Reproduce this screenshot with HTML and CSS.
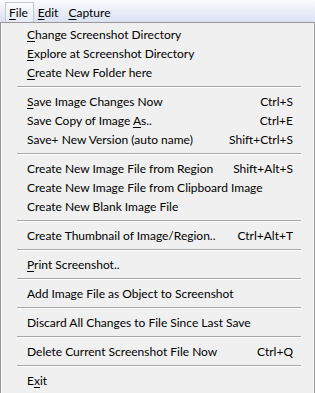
FILE: index.html
```html
<!DOCTYPE html>
<html lang="en">
<head>
    <meta charset="UTF-8">
    <title>File menu</title>
    <link rel="stylesheet" href="styles.css">
</head>
<body>
    <div class="menubar">
        <span class="top-item open"><u>F</u>ile</span>
        <span class="top-item"><u>E</u>dit</span>
        <span class="top-item"><u>C</u>apture</span>
    </div>
    <div class="dropdown">
        <div class="item"><span><u>C</u>hange Screenshot Directory</span></div>
        <div class="item"><span><u>E</u>xplore at Screenshot Directory</span></div>
        <div class="item"><span><u>C</u>reate New Folder here</span></div>
        <div class="sep"></div>
        <div class="item"><span><u>S</u>ave Image Changes Now</span><span class="key">Ctrl+S</span></div>
        <div class="item"><span>Save Copy of Image <u>A</u>s..</span><span class="key">Ctrl+E</span></div>
        <div class="item"><span>Save+ New Version (auto name)</span><span class="key">Shift+Ctrl+S</span></div>
        <div class="sep"></div>
        <div class="item"><span>Create New Image File from Region</span><span class="key">Shift+Alt+S</span></div>
        <div class="item"><span>Create New Image File from Clipboard Image</span></div>
        <div class="item"><span>Create New Blank Image File</span></div>
        <div class="sep"></div>
        <div class="item"><span>Create Thumbnail of Image/Region..</span><span class="key">Ctrl+Alt+T</span></div>
        <div class="sep"></div>
        <div class="item"><span><u>P</u>rint Screenshot..</span></div>
        <div class="sep"></div>
        <div class="item"><span>Add Image File as Object to Screenshot</span></div>
        <div class="sep"></div>
        <div class="item"><span>Discard All Changes to File Since Last Save</span></div>
        <div class="sep"></div>
        <div class="item"><span>Delete Current Screenshot File Now</span><span class="key">Ctrl+Q</span></div>
        <div class="sep"></div>
        <div class="item"><span>E<u>x</u>it</span></div>
    </div>
</body>
</html>
```

FILE: styles.css
```css
body {
    margin: 0;
    width: 315px;
    height: 393px;
    overflow: hidden;
    background-color: #f0f0f0;
    font-family: "Segoe UI", Lato, "Liberation Sans", sans-serif;
    font-size: 12px;
    color: #000000;
}
u {
    text-decoration-thickness: 1px;
    text-underline-offset: 2px;
}
.menubar {
    display: flex;
    height: 23px;
    padding-left: 5px;
    background: linear-gradient(to bottom, #fbfcfe 0%, #e9edf7 50%, #dbe2f3 100%);
    border-bottom: 1px solid #979797;
    box-sizing: border-box;
}
.top-item {
    padding: 0 5px 0 3px;
    margin-top: 2px;
    line-height: 20px;
    border: 1px solid transparent;
    border-bottom: none;
}
.top-item.open {
    border-color: #c3c8d2;
    background: linear-gradient(to bottom, #fafbfd, #e6ebf6);
}
.dropdown {
    border-left: 1px solid #979797;
    border-right: 1px solid #979797;
    box-shadow: inset 1px 0 0 #fafafa, inset -1px 0 0 #fafafa;
    padding-top: 2px;
    height: 370px;
    box-sizing: border-box;
}
.item {
    display: flex;
    justify-content: space-between;
    height: 19px;
    line-height: 19px;
    padding: 0 21px 0 26px;
    white-space: nowrap;
}
.key {
    padding-left: 12px;
}
.sep {
    height: 10px;
    margin: 0 13px 0 16px;
    background: linear-gradient(to bottom, transparent 4px, #a8a8a8 4px, #a8a8a8 5px, #ffffff 5px, #ffffff 6px, transparent 6px);
}
```
